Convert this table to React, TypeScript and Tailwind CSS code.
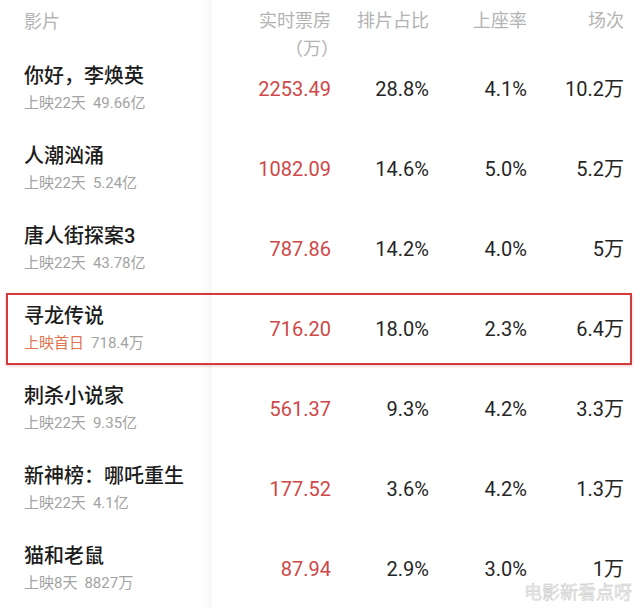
import React from "react";

// ---------------------------------------------------------------------------
// Data
// ---------------------------------------------------------------------------

interface Film {
  name: string;
  days: string;
  total: string;
  box: string;
  share: string;
  seat: string;
  shows: string;
  firstDay?: boolean;
}

const films: Film[] = [
  { name: "你好，李焕英", days: "上映22天", total: "49.66亿", box: "2253.49", share: "28.8%", seat: "4.1%", shows: "10.2万" },
  { name: "人潮汹涌", days: "上映22天", total: "5.24亿", box: "1082.09", share: "14.6%", seat: "5.0%", shows: "5.2万" },
  { name: "唐人街探案3", days: "上映22天", total: "43.78亿", box: "787.86", share: "14.2%", seat: "4.0%", shows: "5万" },
  { name: "寻龙传说", days: "上映首日", total: "718.4万", box: "716.20", share: "18.0%", seat: "2.3%", shows: "6.4万", firstDay: true },
  { name: "刺杀小说家", days: "上映22天", total: "9.35亿", box: "561.37", share: "9.3%", seat: "4.2%", shows: "3.3万" },
  { name: "新神榜：哪吒重生", days: "上映22天", total: "4.1亿", box: "177.52", share: "3.6%", seat: "4.2%", shows: "1.3万" },
  { name: "猫和老鼠", days: "上映8天", total: "8827万", box: "87.94", share: "2.9%", seat: "3.0%", shows: "1万" },
];

const font = "font-['Roboto','Noto_Sans_CJK_SC',sans-serif]";
// sticky-column edge: faint band just right of the name column
const edge = "bg-[linear-gradient(to_left,rgba(0,0,0,0.03),rgba(0,0,0,0)_10px)]";

// ---------------------------------------------------------------------------
// Row
// ---------------------------------------------------------------------------

function FilmRow({ film }: { film: Film }) {
  return (
    <div className="relative flex h-[80px]">
      <div className={`w-[212px] shrink-0 pl-6 pt-[10px] ${edge}`}>
        <p className="text-[20px] leading-[28px] font-medium text-[#1c1c1c] whitespace-nowrap">{film.name}</p>
        <p className="text-[15px] leading-[26px] text-[#a3a3a3] whitespace-nowrap">
          <span className={film.firstDay ? "text-[#e0764f]" : ""}>{film.days}</span>
          <span className="ml-[7px]">{film.total}</span>
        </p>
      </div>
      <div className="flex h-[64px] items-center pt-[10px] text-[20px] text-[#262626]">
        <span className="w-[119px] text-right text-[#cf4747]">{film.box}</span>
        <span className="w-[98px] text-right">{film.share}</span>
        <span className="w-[98px] text-right">{film.seat}</span>
        <span className="w-[97px] text-right">{film.shows}</span>
      </div>
      {/* highlight box */}
      {film.firstDay && (
        <div className="absolute left-[6px] right-[8px] top-[1px] h-[72px] border-2 border-[#d23c3c] shadow-[0_1px_3px_rgba(200,40,40,0.25)]" />
      )}
    </div>
  );
}

// ---------------------------------------------------------------------------
// App
// ---------------------------------------------------------------------------

export default function App() {
  return (
    <div className={`relative w-[640px] h-[608px] overflow-hidden bg-white ${font}`}>
      {/* Header */}
      <div className="flex h-[52px] text-[18px] leading-[28px] text-[#b3b3b3]">
        <div className={`w-[212px] shrink-0 pl-6 pt-[8px] ${edge}`}>影片</div>
        <div className="flex pt-[7px]">
          <div className="w-[119px] text-right">
            <p>实时票房</p>
            <p className="mr-[-8px]">（万）</p>
          </div>
          <span className="w-[98px] text-right">排片占比</span>
          <span className="w-[98px] text-right">上座率</span>
          <span className="w-[97px] text-right">场次</span>
        </div>
      </div>

      {films.map((f) => (
        <FilmRow key={f.name} film={f} />
      ))}
      <div className={`h-[20px] w-[212px] ${edge}`} />

      {/* watermark */}
      <span className="absolute right-[8px] bottom-[6px] text-[18px] leading-none text-[#ececec] [-webkit-text-stroke:0.4px_#c4c4c4]">
        电影新看点呀
      </span>
    </div>
  );
}
